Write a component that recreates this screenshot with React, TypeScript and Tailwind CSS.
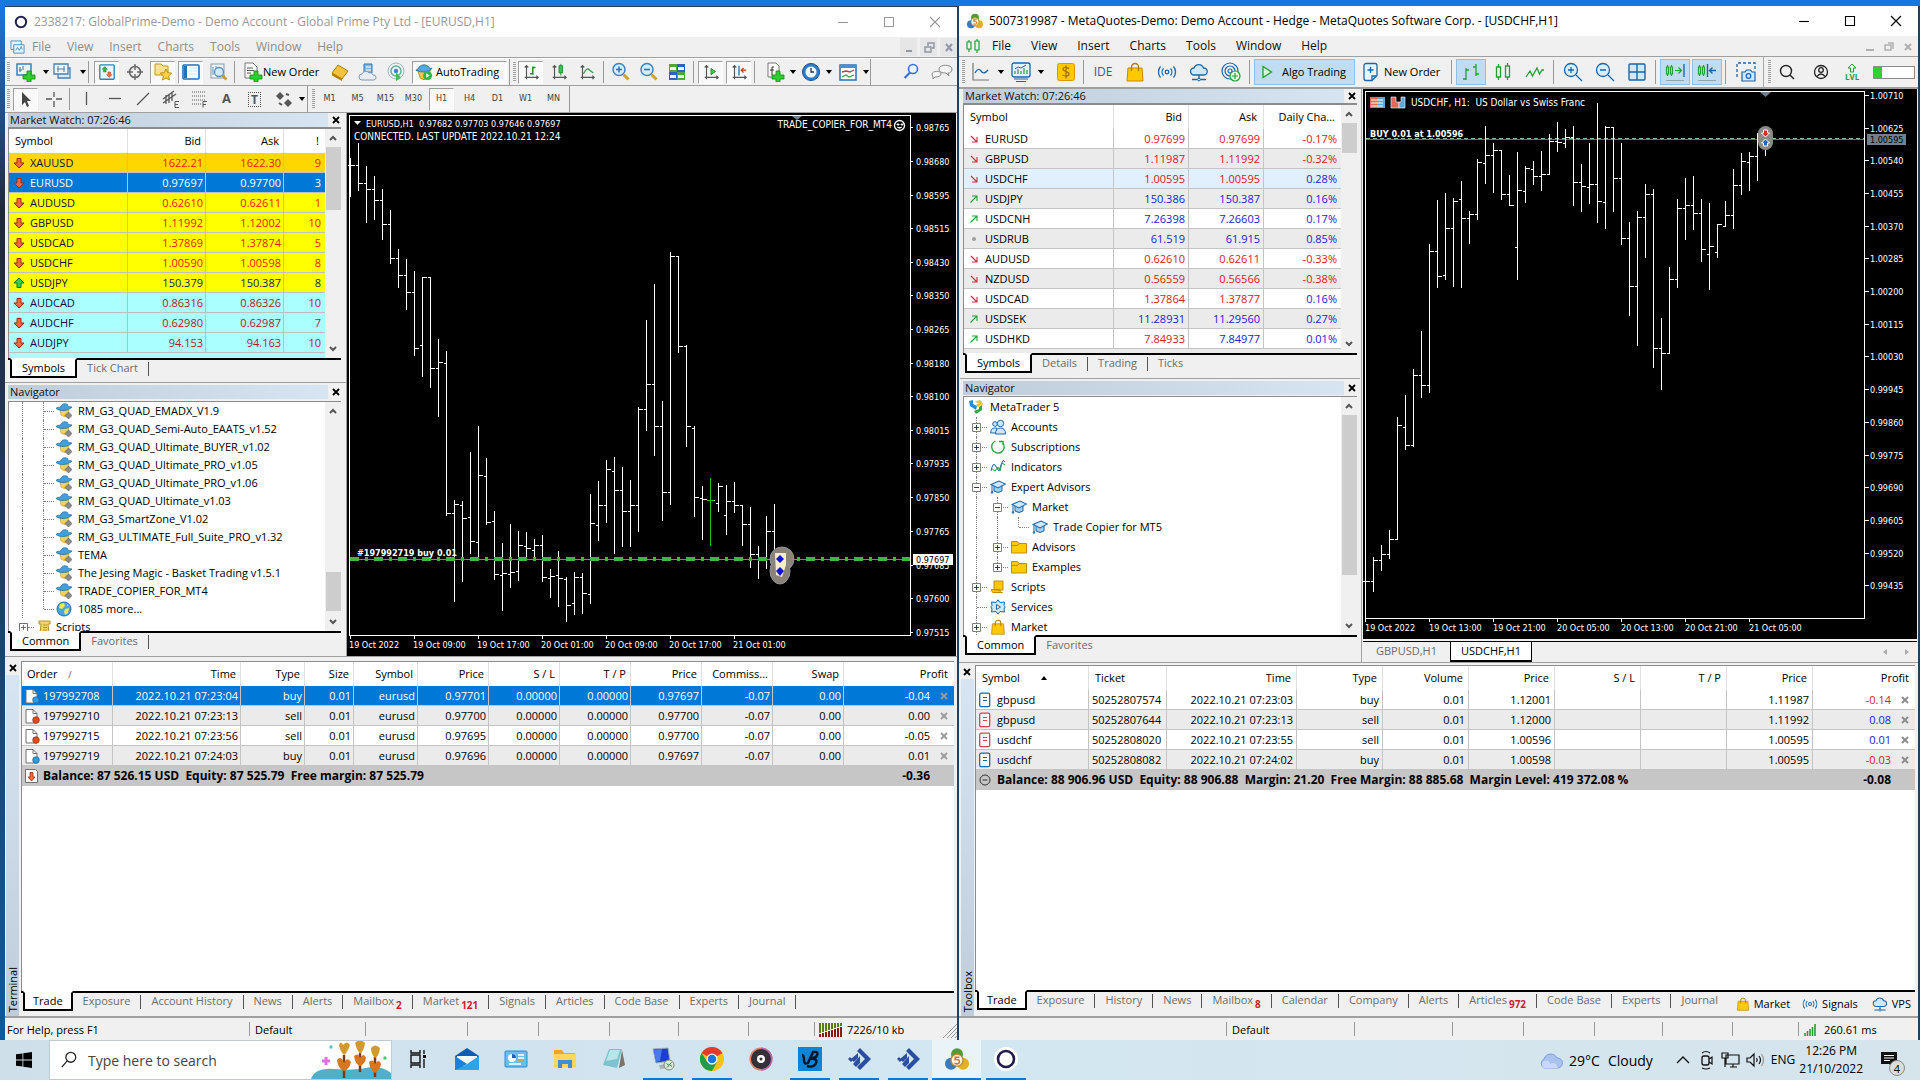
import type { ReactNode } from "react"
import clsx from "clsx"

type Bar = [number, number, number, number]

// open, high, low, close in chart pixels
const eurusdBars: Bar[] = [
  [165, 158, 196, 165], [165, 143, 190, 183], [183, 166, 222, 189], [189, 176, 219, 200], [200, 189, 239, 224],
  [224, 210, 263, 258], [258, 249, 287, 275], [275, 259, 309, 292], [292, 271, 355, 348], [345, 277, 376, 277],
  [277, 277, 387, 368], [368, 339, 416, 362], [363, 351, 515, 513], [513, 500, 601, 504], [505, 501, 581, 518],
  [517, 452, 553, 541], [542, 426, 557, 475], [476, 458, 524, 522], [521, 511, 579, 574], [575, 543, 610, 573],
  [574, 524, 587, 572], [571, 531, 580, 545], [546, 532, 557, 548], [550, 539, 556, 545], [545, 535, 581, 577],
  [578, 569, 597, 576], [575, 551, 606, 578], [579, 577, 621, 605], [603, 572, 614, 577], [577, 573, 613, 593],
  [594, 494, 603, 523], [525, 481, 540, 505], [505, 460, 522, 469], [471, 457, 553, 490], [490, 467, 546, 511],
  [511, 480, 546, 505], [505, 407, 531, 409], [409, 320, 430, 384], [384, 284, 455, 426], [426, 401, 520, 492],
  [492, 252, 504, 256], [256, 256, 352, 346], [346, 345, 446, 426], [428, 426, 516, 497], [498, 486, 539, 499],
  [500, 500, 500, 500], [503, 483, 511, 486], [515, 485, 534, 501], [501, 482, 512, 505], [505, 505, 545, 524],
  [524, 507, 567, 554], [554, 546, 578, 557], [557, 516, 568, 531], [531, 504, 558, 558],
]

const usdchfBars: Bar[] = [
  [581, 581, 581, 581], [581, 557, 591, 560], [560, 545, 570, 554], [554, 530, 558, 539], [539, 417, 539, 425],
  [427, 395, 449, 445], [445, 369, 446, 375], [375, 331, 397, 385], [385, 244, 392, 251], [251, 200, 287, 276],
  [275, 193, 279, 228], [228, 198, 286, 201], [199, 181, 287, 218], [218, 211, 243, 214], [214, 159, 219, 162],
  [163, 126, 183, 155], [155, 143, 192, 150], [150, 150, 199, 194], [194, 175, 205, 205], [247, 152, 279, 190],
  [191, 166, 202, 168], [169, 161, 184, 176], [176, 151, 190, 174], [174, 134, 174, 141], [141, 122, 151, 142],
  [143, 129, 147, 137], [137, 126, 205, 182], [182, 164, 211, 186], [187, 143, 203, 184], [184, 103, 222, 201],
  [202, 126, 228, 127], [127, 127, 211, 178], [178, 143, 244, 238], [238, 222, 315, 286], [286, 211, 345, 217],
  [217, 184, 257, 194], [194, 189, 367, 348], [348, 318, 389, 353], [353, 267, 353, 279], [279, 199, 287, 208],
  [208, 178, 239, 205], [205, 176, 229, 213], [213, 199, 261, 249], [254, 203, 289, 246], [252, 224, 257, 224],
  [226, 201, 226, 215], [215, 169, 228, 185], [185, 153, 194, 161], [162, 152, 190, 156], [156, 133, 180, 139],
  [139, 139, 155, 139],
]

const barPath = (bars: Bar[], x0: number) =>
  bars
    .map(([o, h, l, c], i) => {
      const x = x0 + i * 8
      return `M${x} ${h}V${l + 1}M${x - 3} ${o}H${x}M${x} ${c}H${x + 4}`
    })
    .join("")

const mt4Quotes = [
  { symbol: "XAUUSD", bid: "1622.21", ask: "1622.30", spread: 9, up: false, row: "bg-[#ffd700] text-[#f02000]" },
  { symbol: "EURUSD", bid: "0.97697", ask: "0.97700", spread: 3, up: false, row: "bg-[#0078d7] text-white", selected: true },
  { symbol: "AUDUSD", bid: "0.62610", ask: "0.62611", spread: 1, up: false, row: "bg-[#ffff00] text-[#f02000]" },
  { symbol: "GBPUSD", bid: "1.11992", ask: "1.12002", spread: 10, up: false, row: "bg-[#ffff00] text-[#f02000]" },
  { symbol: "USDCAD", bid: "1.37869", ask: "1.37874", spread: 5, up: false, row: "bg-[#ffff00] text-[#f02000]" },
  { symbol: "USDCHF", bid: "1.00590", ask: "1.00598", spread: 8, up: false, row: "bg-[#ffff00] text-[#f02000]" },
  { symbol: "USDJPY", bid: "150.379", ask: "150.387", spread: 8, up: true, row: "bg-[#ffff00] text-[#1a1a60]" },
  { symbol: "AUDCAD", bid: "0.86316", ask: "0.86326", spread: 10, up: false, row: "bg-[#aaffff] text-[#b01c28]" },
  { symbol: "AUDCHF", bid: "0.62980", ask: "0.62987", spread: 7, up: false, row: "bg-[#aaffff] text-[#b01c28]" },
  { symbol: "AUDJPY", bid: "94.153", ask: "94.163", spread: 10, up: false, row: "bg-[#aaffff] text-[#b01c28]" },
]

const mt5Quotes = [
  { symbol: "EURUSD", bid: "0.97699", ask: "0.97699", change: "-0.17%", dir: "down", bidUp: false, askUp: false },
  { symbol: "GBPUSD", bid: "1.11987", ask: "1.11992", change: "-0.32%", dir: "down", bidUp: false, askUp: false },
  { symbol: "USDCHF", bid: "1.00595", ask: "1.00595", change: "0.28%", dir: "down", bidUp: false, askUp: false },
  { symbol: "USDJPY", bid: "150.386", ask: "150.387", change: "0.16%", dir: "up", bidUp: true, askUp: true },
  { symbol: "USDCNH", bid: "7.26398", ask: "7.26603", change: "0.17%", dir: "up", bidUp: true, askUp: true },
  { symbol: "USDRUB", bid: "61.519", ask: "61.915", change: "0.85%", dir: "none", bidUp: true, askUp: true },
  { symbol: "AUDUSD", bid: "0.62610", ask: "0.62611", change: "-0.33%", dir: "down", bidUp: false, askUp: false },
  { symbol: "NZDUSD", bid: "0.56559", ask: "0.56566", change: "-0.38%", dir: "down", bidUp: false, askUp: false },
  { symbol: "USDCAD", bid: "1.37864", ask: "1.37877", change: "0.16%", dir: "down", bidUp: false, askUp: false },
  { symbol: "USDSEK", bid: "11.28931", ask: "11.29560", change: "0.27%", dir: "up", bidUp: true, askUp: true },
  { symbol: "USDHKD", bid: "7.84933", ask: "7.84977", change: "0.01%", dir: "up", bidUp: false, askUp: true },
]

const mt4Experts = [
  "RM_G3_QUAD_EMADX_V1.9",
  "RM_G3_QUAD_Semi-Auto_EAATS_v1.52",
  "RM_G3_QUAD_Ultimate_BUYER_v1.02",
  "RM_G3_QUAD_Ultimate_PRO_v1.05",
  "RM_G3_QUAD_Ultimate_PRO_v1.06",
  "RM_G3_QUAD_Ultimate_v1.03",
  "RM_G3_SmartZone_V1.02",
  "RM_G3_ULTIMATE_Full_Suite_PRO_v1.32",
  "TEMA",
  "The Jesing Magic - Basket Trading v1.5.1",
  "TRADE_COPIER_FOR_MT4",
  "1085 more...",
]

const mt4Orders = [
  ["197992708", "2022.10.21 07:23:04", "buy", "0.01", "eurusd", "0.97701", "0.00000", "0.00000", "0.97697", "-0.07", "0.00", "-0.04"],
  ["197992710", "2022.10.21 07:23:13", "sell", "0.01", "eurusd", "0.97700", "0.00000", "0.00000", "0.97700", "-0.07", "0.00", "0.00"],
  ["197992715", "2022.10.21 07:23:56", "sell", "0.01", "eurusd", "0.97695", "0.00000", "0.00000", "0.97700", "-0.07", "0.00", "-0.05"],
  ["197992719", "2022.10.21 07:24:03", "buy", "0.01", "eurusd", "0.97696", "0.00000", "0.00000", "0.97697", "-0.07", "0.00", "0.01"],
]

const mt5Orders = [
  ["gbpusd", "50252807574", "2022.10.21 07:23:03", "buy", "0.01", "1.12001", "", "", "1.11987", "-0.14"],
  ["gbpusd", "50252807644", "2022.10.21 07:23:13", "sell", "0.01", "1.12000", "", "", "1.11992", "0.08"],
  ["usdchf", "50252808020", "2022.10.21 07:23:55", "sell", "0.01", "1.00596", "", "", "1.00595", "0.01"],
  ["usdchf", "50252808082", "2022.10.21 07:24:02", "buy", "0.01", "1.00598", "", "", "1.00595", "-0.03"],
]

/* ---------- shared bits ---------- */

function Svg({ children, className = "size-5", box = "0 0 20 20" }: { children: ReactNode; className?: string; box?: string }) {
  return (
    <svg viewBox={box} className={clsx("shrink-0", className)} fill="none" aria-hidden="true">
      {children}
    </svg>
  )
}

function CloseX({ className = "text-black" }: { className?: string }) {
  return (
    <Svg box="0 0 8 8" className={clsx("size-2", className)}>
      <path d="M1 1l6 6M7 1L1 7" stroke="currentColor" strokeWidth="1.8" />
    </Svg>
  )
}

function Caret() {
  return (
    <Svg box="0 0 8 6" className="h-1.5 w-2">
      <path d="M1 1h6L4 5z" fill="#000" />
    </Svg>
  )
}

function ScrollBar({ thumb }: { thumb: string }) {
  return (
    <div className="flex w-4 shrink-0 flex-col items-center bg-[#f0f0f0]">
      <Svg box="0 0 16 18" className="h-[18px] w-4">
        <path d="M5 11l3-3 3 3" stroke="#555" strokeWidth="2" />
      </Svg>
      <div className="relative w-full flex-1">
        <div className={clsx("absolute right-0 w-[15px] bg-[#cdcdcd]", thumb)} />
      </div>
      <Svg box="0 0 16 18" className="h-[18px] w-4">
        <path d="M5 7l3 3 3-3" stroke="#555" strokeWidth="2" />
      </Svg>
    </div>
  )
}

function PanelHeader({ title }: { title: string }) {
  return (
    <div className="-mr-[3px] flex h-[14px] shrink-0 items-center">
      <h2 className="flex h-[14px] flex-1 items-center bg-linear-to-r from-[#bfcddb] to-[#d7e4f2] pl-0.5 text-[11px] leading-3 text-[#111]">{title}</h2>
      <button className="flex h-[14px] w-4 items-center justify-center" aria-label={`Close ${title}`}>
        <CloseX />
      </button>
    </div>
  )
}

// tab strip below a panel, the first tab is the open one
function Tabs({ items, closed = true, first = "px-2.5" }: { items: { label: string; count?: string }[]; closed?: boolean; first?: string }) {
  return (
    <div className="flex h-5 min-w-0 flex-1 items-stretch text-[11px] leading-4 text-[#6d6d6d]">
      <div className="w-0.5 shrink-0 border-t-2 border-black" />
      {items.map((t, i) =>
        i === 0 ? (
          <button key={t.label} className={clsx("shrink-0 border-2 border-black border-t-white bg-white text-black", first)}>
            {t.label}
          </button>
        ) : (
          <div key={t.label} className="flex shrink-0 items-center border-t-2 border-black">
            {i > 1 && <span className="h-[14px] w-px bg-[#555]" />}
            <button className="relative px-2.5 pb-0.5 whitespace-nowrap">
              {t.label}
              {t.count && <sub className="bottom-[-4px] ml-0.5 text-[10px] font-bold text-[#d02030]">{t.count}</sub>}
            </button>
          </div>
        )
      )}
      <div className="flex flex-1 items-center border-t-2 border-black">{closed && <span className="h-[14px] w-px bg-[#555]" />}</div>
    </div>
  )
}

// blue strip on the left of the bottom panel, its name reads upwards
function SideCaption({ title }: { title: string }) {
  return (
    <>
      <button aria-label={`Close ${title}`} className="flex h-[14px] items-center">
        <CloseX />
      </button>
      <div className="flex w-[13px] flex-1 flex-col justify-end bg-linear-to-b from-[#d7e4f2] to-[#bfcddb] pb-1">
        <span className="rotate-180 text-[11px] leading-[13px] text-black [writing-mode:vertical-rl]">{title}</span>
      </div>
    </>
  )
}

function Grip({ className = "h-5" }: { className?: string }) {
  return <span className={clsx("w-[3px] shrink-0 bg-[repeating-linear-gradient(#a0a0a0_0_1px,#f0f0f0_1px_2px)]", className)} />
}

/* ---------- MT4 ---------- */

function Tool({ children, label, on = false, className = "w-[25px]" }: { children: ReactNode; label: string; on?: boolean; className?: string }) {
  return (
    <button
      aria-label={label}
      className={clsx(
        "mr-[3px] flex h-[23px] shrink-0 items-center justify-center border",
        on ? "border-[#a0a0a0] border-r-white border-b-white bg-[#f9f9f9]" : "border-transparent",
        className
      )}
    >
      {children}
    </button>
  )
}

function Sep({ className = "mr-1 ml-px h-[22px]" }: { className?: string }) {
  return <span className={clsx("w-px shrink-0 bg-[#999]", className)} />
}

function Plus() {
  return <path d="M11 9h4v4h4v4h-4v3h-4v-3H7v-4h4z" fill="#2fce2f" stroke="#0a8a0a" strokeWidth=".8" />
}

function Axes({ children }: { children: ReactNode }) {
  return (
    <Svg className="size-[18px]">
      <path d="M5 3v15M3 16h15M3 5l2-2 2 2M16 14l2 2-2 2" stroke="#555" strokeWidth="1.3" />
      {children}
    </Svg>
  )
}

function Mt4Tools() {
  return (
    <div className="flex h-[27px] items-center border-t border-white pl-0.5">
      <Grip />
      <button aria-label="New Chart" className="ml-1.5 flex w-[37px] shrink-0 items-center gap-1.5">
        <Svg>
          <rect x="1" y="2" width="14" height="11" fill="#eaf5fb" stroke="#2f78b5" strokeWidth="1.4" />
          <path d="M4 5v5M7 4v4M3 8h3" stroke="#2f78b5" />
          <Plus />
        </Svg>
        <Caret />
      </button>
      <button aria-label="Profiles" className="flex w-[35px] shrink-0 items-center gap-1.5">
        <Svg>
          <path d="M5 6h12v10H5z" fill="#d9ebf7" stroke="#4b7fae" strokeWidth="1.3" />
          <path d="M1 2h14v10H1z" fill="#eef6fb" stroke="#4b7fae" strokeWidth="1.3" />
          <path d="M4 7h8M5 4v6M11 4v6" stroke="#4b7fae" />
        </Svg>
        <Caret />
      </button>
      <Sep className="mr-1 h-[22px]" />
      <span className="w-px" />
      <Tool label="Market Watch" on>
        <Svg className="size-[18px]">
          <rect x="2" y="2" width="16" height="16" rx="1" fill="#eaf6fc" stroke="#2a84b8" strokeWidth="1.5" />
          <path d="M7.500 4l3 3H9v3H6V7H4.500z" fill="#35b64a" stroke="#137a25" strokeWidth=".5" />
          <path d="M12.500 16l-3-3H11v-3h3v3h1.500z" fill="#f2703f" stroke="#a8320f" strokeWidth=".5" />
        </Svg>
      </Tool>
      <Tool label="Data Window">
        <Svg>
          <circle cx="10" cy="10" r="5.500" stroke="#666" strokeWidth="1.600" />
          <path d="M10 2v6M10 12v6M2 10h6M12 10h6" stroke="#666" strokeWidth="1.400" />
        </Svg>
      </Tool>
      <Tool label="Navigator" on>
        <Svg>
          <path d="M2 2h6l2 2h5v9H2z" fill="#fbe292" stroke="#c39a1d" />
          <path d="M13 7l1.700 3.600 4 .5-3 2.800.8 4.100-3.500-2-3.500 2 .8-4.100-3-2.800 4-.5z" fill="#ffd23f" stroke="#b27b08" strokeWidth=".8" />
        </Svg>
      </Tool>
      <Tool label="Terminal" on>
        <Svg>
          <rect x="2" y="3" width="16" height="14" rx="1" fill="#fff" stroke="#2a6fae" strokeWidth="1.600" />
          <path d="M3 4h3v12H3z" fill="#2a6fae" />
          <path d="M8 6h8M8 9h8M8 12h8" stroke="#cfe2f2" />
        </Svg>
      </Tool>
      <Tool label="Strategy Tester">
        <Svg>
          <rect x="2" y="2" width="13" height="14" fill="#f4f7fa" stroke="#8a99a8" />
          <path d="M4 5v8M7 4v6" stroke="#4f94c9" />
          <circle cx="10" cy="10" r="4.500" fill="#cfe8fa" stroke="#5790c0" strokeWidth="1.300" />
          <path d="M13.500 13.500l4 4" stroke="#c79a2c" strokeWidth="2.500" />
        </Svg>
      </Tool>
      <Sep className="mr-2 h-[22px]" />
      <button className="flex w-[84px] shrink-0 items-center text-[11px] whitespace-nowrap text-black">
        <Svg>
          <path d="M2 1h8l4 4v11H2z" fill="#fff" stroke="#777" />
          <path d="M4 6h6M4 8.500h7M4 11h4" stroke="#555" />
          <Plus />
        </Svg>
        New Order
      </button>
      <Tool label="MetaEditor">
        <Svg>
          <path d="M2 11l6-8 10 6-6 8z" fill="#f2c23c" stroke="#b07c0b" />
          <path d="M2 11l10 6v2L2 13.500z" fill="#b9790a" />
        </Svg>
      </Tool>
      <Tool label="MQL5 Cloud">
        <Svg>
          <path d="M6 2h8v9H6z" fill="#7db8e8" stroke="#2f78b5" />
          <path d="M8 5h5M8 8h5" stroke="#fff" />
          <path d="M4 18a3 3 0 010-6 4 4 0 017-1 3 3 0 014 2 2.500 2.500 0 011 5z" fill="#e7eef5" stroke="#7f9ab5" />
        </Svg>
      </Tool>
      <Tool label="Signals">
        <Svg>
          <circle cx="10" cy="9" r="8" stroke="#9db7c9" />
          <circle cx="10" cy="9" r="5" stroke="#5fae93" strokeWidth="1.400" />
          <circle cx="10" cy="9" r="2.200" fill="#2f8ad0" />
          <path d="M10 10v9l5-3" fill="#49b85c" />
        </Svg>
      </Tool>
      <button className="ml-px flex h-[23px] w-[95px] shrink-0 items-center gap-[3px] border border-[#a0a0a0] border-r-white border-b-white bg-[#f9f9f9] px-0.5 text-[11px] text-black">
        <Svg className="size-[18px]">
          <path d="M3 8h14l-3 9q-4 3-8 0z" fill="#f0cb45" stroke="#ad841d" />
          <path d="M1 8q3-1 4-4 5-4 10 0 1 3 4 2-7 7-18 2z" fill="#55a8dc" stroke="#2774aa" />
          <circle cx="14" cy="14" r="5" fill="#2fb544" />
          <path d="M12.500 11.500v5l4-2.500z" fill="#fff" />
        </Svg>
        AutoTrading
      </button>
      <Sep className="mr-[3px] ml-0.5 h-[26px]" />
      <Grip />
      <span className="w-0.5" />
      <Tool label="Bar Chart" on>
        <Axes>
          <path d="M12 4v9M9 12h3M12 5h3" stroke="#1e8c2c" strokeWidth="1.600" />
        </Axes>
      </Tool>
      <Tool label="Candlesticks">
        <Axes>
          <path d="M12 1v13" stroke="#1e8c2c" />
          <path d="M10 3h4v8h-4z" fill="#35c84a" stroke="#1e8c2c" />
        </Axes>
      </Tool>
      <Tool label="Line Chart">
        <Axes>
          <path d="M6 12q4-8 7-4l4 3" stroke="#3f9a4c" strokeWidth="1.400" />
        </Axes>
      </Tool>
      <Sep />
      <Tool label="Zoom In">
        <Svg>
          <circle cx="8" cy="7.500" r="6" fill="#d5ecfb" stroke="#3b86c2" strokeWidth="1.500" />
          <path d="M8 4.500v6M5 7.500h6" stroke="#2e74b0" strokeWidth="1.600" />
          <path d="M12.500 12.500l5 5" stroke="#cfa32e" strokeWidth="3" />
        </Svg>
      </Tool>
      <Tool label="Zoom Out">
        <Svg>
          <circle cx="8" cy="7.500" r="6" fill="#d5ecfb" stroke="#3b86c2" strokeWidth="1.500" />
          <path d="M5 7.500h6" stroke="#2e74b0" strokeWidth="1.600" />
          <path d="M12.500 12.500l5 5" stroke="#cfa32e" strokeWidth="3" />
        </Svg>
      </Tool>
      <Tool label="Tile Windows">
        <Svg>
          <path d="M2 2h8v8H2zM10 10h8v8h-8z" fill="#4ea832" />
          <path d="M10 2h8v8h-8zM2 10h8v8H2z" fill="#2b63c4" />
          <path d="M3 5h6v3H3zM11 5h6v3h-6zM3 13h6v3H3zM11 13h6v3h-6z" fill="#eef4ff" />
        </Svg>
      </Tool>
      <Sep />
      <Tool label="Auto Scroll" on>
        <Axes>
          <path d="M10 6v7l5-3.500z" fill="#35c84a" stroke="#1e8c2c" />
        </Axes>
      </Tool>
      <Tool label="Chart Shift" on>
        <Axes>
          <path d="M10 3v11" stroke="#2774aa" strokeWidth="1.500" />
          <path d="M18 8h-5M15 5.500L12.500 8l2.500 2.500" stroke="#c33a13" strokeWidth="1.400" />
        </Axes>
      </Tool>
      <Sep className="mr-2.5 h-[22px]" />
      <button aria-label="Indicators" className="flex w-9 shrink-0 items-center gap-1">
        <Svg>
          <path d="M3 1h8l3 3v11H3z" fill="#fff" stroke="#777" />
          <path d="M9 5H7v8M5 8h4" stroke="#333" />
          <Plus />
        </Svg>
        <Caret />
      </button>
      <button aria-label="Periods" className="flex w-[37px] shrink-0 items-center gap-1">
        <Svg>
          <circle cx="10" cy="10" r="8.500" fill="#2f7fc8" stroke="#1b4f8c" />
          <circle cx="10" cy="10" r="5.500" fill="#f3f9fd" />
          <path d="M10 6v4h3" stroke="#234" strokeWidth="1.300" />
        </Svg>
        <Caret />
      </button>
      <button aria-label="Templates" className="flex w-8 shrink-0 items-center gap-1">
        <Svg>
          <rect x="2" y="3" width="16" height="15" fill="#fff" stroke="#2a6fae" strokeWidth="1.500" />
          <path d="M2 3h16v3H2z" fill="#4a90d0" />
          <path d="M4 10l4-1 4 1 4-2" stroke="#b04a3c" strokeWidth="1.300" />
          <path d="M4 15l4-2 3 2 5-2" stroke="#3a9a46" strokeWidth="1.300" />
        </Svg>
        <Caret />
      </button>
      <span className="h-[26px] w-px bg-[#999]" />
      <div className="flex flex-1 items-center justify-end gap-2.5 pr-1">
        <Svg>
          <circle cx="12" cy="7" r="4.500" fill="#eaf5ff" stroke="#3b6fd8" strokeWidth="1.600" />
          <path d="M9 10.500L3.500 16" stroke="#3b6fd8" strokeWidth="2.200" />
        </Svg>
        <Svg box="0 0 22 16" className="h-4 w-[22px]">
          <path d="M1 10c0-3 9-4 9 0 0 2-3 3-6 3l-2 2v-2z" fill="#f4f4f4" stroke="#8a8a8a" />
          <path d="M8 5c0-5 13-5 13 0 0 3-2 4-4 4l1 3-3-3c-4 0-7-1-7-4z" fill="#f4f4f4" stroke="#8a8a8a" />
        </Svg>
      </div>
    </div>
  )
}

function Mt4DrawTools() {
  const line = "#555"
  const frames = ["M1", "M5", "M15", "M30", "H1", "H4", "D1", "W1", "MN"]
  return (
    <div className="flex h-[27px] items-center border-t border-[#a0a0a0] pl-0.5 text-[#444]">
      <Grip />
      <span className="w-[3px]" />
      <Tool label="Cursor" on>
        <Svg><path d="M6 3v13l3-3 2 5 2-1-2-5h4z" fill="#444" /></Svg>
      </Tool>
      <Tool label="Crosshair">
        <Svg><path d="M10 3v5M10 12v6M2 10h6M12 10h6" stroke={line} strokeWidth="1.300" /></Svg>
      </Tool>
      <Sep className="mr-1 h-[22px]" />
      <Tool label="Vertical Line">
        <Svg><path d="M9.500 3v13" stroke={line} strokeWidth="1.300" /></Svg>
      </Tool>
      <Tool label="Horizontal Line">
        <Svg><path d="M4 9.500h12" stroke={line} strokeWidth="1.300" /></Svg>
      </Tool>
      <Tool label="Trendline">
        <Svg><path d="M4 16L16 4" stroke={line} strokeWidth="1.300" /></Svg>
      </Tool>
      <Tool label="Equidistant Channel">
        <Svg>
          <path d="M2 10L13 2M2 14L15 5M5 6v9M8 5v9M11 3v9" stroke={line} strokeWidth="1.300" />
          <path d="M18 12.500h-4v6h4M14 15.500h3" stroke={line} />
        </Svg>
      </Tool>
      <Tool label="Fibonacci">
        <Svg>
          <path d="M3 3h14M3 7h14M3 11h14M3 15h9" stroke={line} strokeDasharray="1 1" />
          <path d="M18 12.500h-4v6M14 15.500h3" stroke={line} />
        </Svg>
      </Tool>
      <Tool label="Text">
        <span className="text-[13px] font-bold text-[#555]">A</span>
      </Tool>
      <Tool label="Text Label">
        <span className="border border-dotted border-[#555] px-0.5 text-[12px] leading-[13px] font-bold text-[#555]">T</span>
      </Tool>
      <button aria-label="Arrows" className="flex w-[37px] shrink-0 items-center gap-1 pl-1">
        <Svg>
          <path d="M6 3l4 4-4 4-4-4zM14 10l4 4-4 4-4-4z" fill="#555" />
          <path d="M5 14l3 2M12 5l3 1" stroke="#555" strokeWidth="2" />
        </Svg>
        <Caret />
      </button>
      <span className="mr-1 h-[26px] w-px bg-[#999]" />
      <Grip />
      <span className="w-0.5" />
      {frames.map((f) => (
        <Tool key={f} label={f} on={f === "H1"}>
          <span className="font-['DejaVu_Sans_Condensed','DejaVu_Sans',sans-serif] text-[9px]">{f}</span>
        </Tool>
      ))}
      <span className="h-[26px] w-px bg-[#999]" />
    </div>
  )
}

function QuoteArrow({ up }: { up: boolean }) {
  return (
    <Svg box="0 0 12 12" className="size-3">
      {up ? (
        <path d="M6 1l5 5H8v4.500H4V6H1z" fill="#35d04a" stroke="#0d7a1e" />
      ) : (
        <path d="M6 11L1 6h3V1.500h4V6h3z" fill="#f4693a" stroke="#a3290a" />
      )}
    </Svg>
  )
}

function HatIcon() {
  return (
    <Svg box="0 0 16 16" className="size-4">
      <path d="M4 7h9l-1 5-3 2-4-2z" fill="#f0d25c" stroke="#b8952f" strokeWidth=".6" />
      <path d="M0 5.500C3 8.500 13 8 16 4 13 3.500 12 4 11.500 1.500 9 0 6 .5 4.500 4 3 4.500 1 4 0 5.500z" fill="#3fa0dc" stroke="#1d6aa5" strokeWidth=".7" />
      <path d="M12.500 9l3.500 3.500-3.500 3.500L9 12.500z" fill="#8a8a8a" stroke="#5c5c5c" strokeWidth=".6" />
    </Svg>
  )
}

function Mt4MarketWatch() {
  return (
    <section className="flex h-[270px] flex-col border-b border-[#a0a0a0] pr-[5px] pb-1 pl-[3px]">
      <PanelHeader title="Market Watch: 07:26:46" />
      <div className="flex min-h-0 flex-1 overflow-hidden border-t-2 border-l border-[#8c8c8c] bg-white">
        <div className="min-w-0 flex-1 overflow-hidden bg-[linear-gradient(white_60%,#aaffff_60%)]">
          <table className="w-full table-fixed border-separate border-spacing-0 bg-white text-[11px] leading-4">
            <colgroup>
              <col />
              <col className="w-[78px]" />
              <col className="w-[78px]" />
              <col className="w-[41px]" />
            </colgroup>
            <thead>
              <tr className="h-6 text-right">
                <th className="border-r border-[#e0e0e0] pl-1.5 text-left font-normal">Symbol</th>
                <th className="border-r border-[#e0e0e0] pr-1 font-normal">Bid</th>
                <th className="border-r border-[#e0e0e0] pr-1 font-normal">Ask</th>
                <th className="pr-1.5 font-normal">!</th>
              </tr>
            </thead>
            <tbody>
              {mt4Quotes.map((q) => (
                <tr key={q.symbol} className={clsx("h-5 text-right", q.row)}>
                  <td className={clsx("border-r border-b border-[#c0c0c0] pl-1 text-left", q.selected ? "text-white" : "text-[#10103a]")}>
                    <span className="flex items-center gap-[5px]">
                      <QuoteArrow up={q.up} />
                      {q.symbol}
                    </span>
                  </td>
                  <td className="border-r border-b border-[#c0c0c0] pr-0.5">{q.bid}</td>
                  <td className="border-r border-b border-[#c0c0c0] pr-0.5">{q.ask}</td>
                  <td className="border-b border-[#c0c0c0] pr-1">{q.spread}</td>
                </tr>
              ))}
            </tbody>
          </table>
        </div>
        <ScrollBar thumb="top-0 h-[63px]" />
      </div>
      <div className="flex">
        <Tabs items={[{ label: "Symbols" }, { label: "Tick Chart" }]} />
      </div>
    </section>
  )
}

function Mt4Navigator() {
  return (
    <section className="flex min-h-0 flex-1 flex-col pt-0.5 pr-[5px] pb-[5px] pl-[3px]">
      <PanelHeader title="Navigator" />
      <div className="mt-0.5 flex min-h-0 flex-1 overflow-hidden border-t border-l border-[#8c8c8c] bg-white">
        <ul className="h-0 min-w-0 flex-1 text-[11px] leading-4 text-black">
          {mt4Experts.map((name, i) => (
            <li key={name} className="flex h-[18px] items-center">
              <span className="h-full w-[14px] border-r border-dotted border-[#808080]" />
              <span className={clsx("w-[21px] border-r border-dotted border-[#808080]", i === mt4Experts.length - 1 ? "h-1/2 self-start" : "h-full")} />
              <span className="mr-0.5 w-[10px] border-t border-dotted border-[#808080]" />
              {i === mt4Experts.length - 1 ? (
                <Svg box="0 0 16 16" className="size-4">
                  <circle cx="8" cy="8" r="7" fill="#49a5dc" stroke="#2070a8" />
                  <path d="M4 3l4-1 1 3-3 3-3-1zM9 8l4-1-1 5-3 2-1-3zM11 3l2 2h-2z" fill="#e6e85a" />
                </Svg>
              ) : (
                <HatIcon />
              )}
              <span className="ml-1.5 whitespace-nowrap">{name}</span>
            </li>
          ))}
          <li className="flex h-[18px] items-center">
            <Svg box="0 0 9 9" className="ml-[10px] size-[9px]">
              <path d="M.5.5h8v8h-8zM2 4.500h5M4.500 2v5" stroke="#707070" />
            </Svg>
            <span className="mr-0.5 w-1.5 border-t border-dotted border-[#808080]" />
            <Svg box="0 0 16 16" className="size-4">
              <path d="M3 2h11v3h-2l1 9H4l1-9H3z" fill="#f3d565" stroke="#b5922a" />
              <path d="M7 6h4M7 8.500h4M7 11h4" stroke="#b5922a" />
            </Svg>
            <span className="ml-1">Scripts</span>
          </li>
        </ul>
        <ScrollBar thumb="bottom-0.5 h-[39px]" />
      </div>
      <div className="flex">
        <Tabs items={[{ label: "Common" }, { label: "Favorites" }]} />
      </div>
    </section>
  )
}

const mt4Axis: [string, number][] = [
  ["0.98765", 127], ["0.98680", 161], ["0.98595", 195], ["0.98515", 228], ["0.98430", 262], ["0.98350", 295],
  ["0.98265", 329], ["0.98180", 363], ["0.98100", 396], ["0.98015", 430], ["0.97935", 463], ["0.97850", 497],
  ["0.97765", 531], ["0.97685", 565], ["0.97600", 598], ["0.97515", 632],
]
const mt4Dates = ["19 Oct 2022", "19 Oct 09:00", "19 Oct 17:00", "20 Oct 01:00", "20 Oct 09:00", "20 Oct 17:00", "21 Oct 01:00"]

function Mt4Chart() {
  return (
    <svg viewBox="347 113 609 543" className="block size-full bg-black font-['DejaVu_Sans_Condensed','DejaVu_Sans',sans-serif] text-[9px]" fill="white">
      <path d="M349.500 635V115.500H910.500V635.500H349" stroke="white" fill="none" shapeRendering="crispEdges" />
      <path d={barPath(eurusdBars, 350.5)} stroke="white" fill="none" shapeRendering="crispEdges" />
      <path d="M710.500 478V546M707 500.500H714" stroke="#20c020" fill="none" shapeRendering="crispEdges" />
      <path d="M350 559.500H910" stroke="#778899" shapeRendering="crispEdges" />
      <path d="M350 559H910" stroke="#3cb83c" strokeWidth="4" strokeDasharray="9 6 3 6" />
      <g>
        <ellipse cx="782" cy="559" rx="12" ry="12" fill="#8b8378" stroke="#8a94a0" />
        <ellipse cx="780" cy="571" rx="10" ry="13" fill="#8b8378" stroke="#8a94a0" />
        <path d="M775 553h11v12l-4 12-6-2z" fill="#f4eecb" />
        <path d="M780 555l4 4-4 4-4-4zM780 567l4 4-4 5-4-5z" fill="#1010d8" />
      </g>
      <path d="M792 116h10l-5 4z" fill="#708090" />
      <path d="M354 121h7l-3.500 4z" />
      <text x="366" y="127" xmlSpace="preserve">EURUSD,H1  0.97682 0.97703 0.97646 0.97697</text>
      <text x="354" y="140" className="text-[10px]">CONNECTED. LAST UPDATE 2022.10.21 12:24</text>
      <text x="892" y="128" textAnchor="end" className="text-[10px]">TRADE_COPIER_FOR_MT4</text>
      <circle cx="899.500" cy="125.500" r="5" fill="none" stroke="white" strokeWidth="1.300" />
      <path d="M897 124h2v1h-2zM901 124h2v1h-2zM897 127q2.500 2.500 5 0" stroke="white" strokeWidth=".8" />
      <text x="357" y="556" className="font-bold">#197992719 buy 0.01</text>
      {mt4Axis.map(([label, y]) => (
        <g key={label}>
          <path d={`M910 ${y + 0.5}h3`} stroke="white" shapeRendering="crispEdges" />
          <text x="916" y={y + 4}>{label}</text>
        </g>
      ))}
      <rect x="913" y="554" width="40" height="11" />
      <text x="916" y="563" fill="black">0.97697</text>
      {mt4Dates.map((d, i) => (
        <g key={d}>
          <path d={`M${350.5 + i * 64} 635v4`} stroke="white" shapeRendering="crispEdges" />
          <text x={349 + i * 64} y="648">{d}</text>
        </g>
      ))}
    </svg>
  )
}

function DocIcon({ buy }: { buy: boolean }) {
  return (
    <Svg box="0 0 16 16" className="size-4">
      <path d="M2 1.500h7l4 4V15H2z" fill="#fff" stroke="#707070" />
      <path d="M9 1.500v4h4" stroke="#707070" />
      <circle cx="12" cy="12" r="3.300" fill={buy ? "#2f9be0" : "#e04a1c"} stroke={buy ? "#15619c" : "#9a2c0a"} strokeWidth=".7" />
    </Svg>
  )
}

function Mt4Terminal() {
  const heads = ["Time", "Type", "Size", "Symbol", "Price", "S / L", "T / P", "Price", "Commiss...", "Swap"]
  return (
    <section className="flex min-h-0 flex-1 border-t border-[#a0a0a0] pt-1">
      <div className="flex w-[15px] shrink-0 flex-col items-center">
        <SideCaption title="Terminal" />
      </div>
      <div className="flex min-w-0 flex-1 flex-col pr-[3px]">
        <div className="ml-px flex-1 border-t border-l border-[#8c8c8c] bg-white">
          <table className="w-full table-fixed border-separate border-spacing-0 text-right text-[11px] leading-4 text-black">
            <colgroup>
              <col className="w-[91px]" />
              <col className="w-[128px]" />
              <col className="w-[64px]" />
              <col className="w-[49px]" />
              <col className="w-[64px]" />
              <col className="w-[71px]" />
              <col className="w-[71px]" />
              <col className="w-[71px]" />
              <col className="w-[71px]" />
              <col className="w-[71px]" />
              <col className="w-[71px]" />
              <col />
            </colgroup>
            <thead>
              <tr className="h-6">
                <th className="border-r border-[#e0e0e0] pl-[5px] text-left font-normal">Order <span className="ml-2 text-[9px] text-[#555]">/</span></th>
                {heads.map((h, i) => (
                  <th key={i} className="border-r border-[#e0e0e0] pr-1 font-normal">{h}</th>
                ))}
                <th className="pr-1.5 font-normal">Profit</th>
              </tr>
            </thead>
            <tbody>
              {mt4Orders.map((row, r) => (
                <tr key={row[0]} className={clsx("h-5", r === 0 ? "bg-[#0078d7] text-white" : r % 2 ? "bg-[#ebebeb]" : "bg-white")}>
                  <td className="border-r border-b border-[#c4c4c4] pl-0.5 text-left">
                    <span className="flex items-center gap-[3px]">
                      <DocIcon buy={row[2] === "buy"} />
                      {row[0]}
                    </span>
                  </td>
                  {row.slice(1, 11).map((cell, i) => (
                    <td key={i} className="border-r border-b border-[#c4c4c4] pr-0.5">{cell}</td>
                  ))}
                  <td className="border-b border-[#c4c4c4] pr-1.5">
                    <span className="flex items-center justify-end gap-2.5">
                      {row[11]}
                      <CloseX className="text-[#9a9a9a]" />
                    </span>
                  </td>
                </tr>
              ))}
              <tr className="h-5 bg-[#c6c6c6] text-[12px] font-bold">
                <td colSpan={11} className="pl-0.5 text-left">
                  <span className="flex items-center gap-[3px] whitespace-pre">
                    <Svg box="0 0 16 16" className="size-4">
                      <path d="M1.500 1.500h10l2 2v11h-12z" fill="#fff" stroke="#707070" />
                      <path d="M7.500 13L4 9h2V4.500h3V9h2z" fill="#f4693a" stroke="#a3290a" strokeWidth=".8" />
                    </Svg>
                    {"Balance: 87 526.15 USD  Equity: 87 525.79  Free margin: 87 525.79"}
                  </span>
                </td>
                <td className="pr-6">-0.36</td>
              </tr>
            </tbody>
          </table>
        </div>
        <div className="ml-px flex">
          <Tabs
            first="px-2"
            items={[
              { label: "Trade" }, { label: "Exposure" }, { label: "Account History" }, { label: "News" }, { label: "Alerts" },
              { label: "Mailbox", count: "2" }, { label: "Market", count: "121" }, { label: "Signals" }, { label: "Articles" },
              { label: "Code Base" }, { label: "Experts" }, { label: "Journal" },
            ]}
          />
        </div>
        <div className="h-[5px]" />
      </div>
    </section>
  )
}

function Mt4Window() {
  return (
    <main className="mt-px flex min-h-0 min-w-0 flex-col overflow-hidden bg-[#f0f0f0]">
      <header className="flex h-[30px] shrink-0 items-center bg-white pl-[9px] text-[#999]">
        <Svg box="0 0 14 14" className="size-[14px]">
          <circle cx="7" cy="7" r="5.200" stroke="#23234f" strokeWidth="2" />
        </Svg>
        <h1 className="ml-1.5 flex-1 text-[12px] whitespace-nowrap">2338217: GlobalPrime-Demo - Demo Account - Global Prime Pty Ltd - [EURUSD,H1]</h1>
        <WindowButtons />
      </header>
      <nav className="flex h-5 shrink-0 items-center pl-[5px] text-[12px] leading-4 text-[#8e8e8e]">
        <Svg box="0 0 16 16" className="mr-[7px] size-[15px]">
          <path d="M1 1h11v9H1z" fill="#e4f2fb" stroke="#4a90c4" />
          <path d="M4 5h11v9H4z" fill="#e4f2fb" stroke="#4a90c4" />
          <path d="M6 11l2-3 2 3 2-4 1 3" stroke="#4a90c4" />
        </Svg>
        {["File", "View", "Insert", "Charts", "Tools", "Window", "Help"].map((m) => (
          <button key={m} className="pr-4">{m}</button>
        ))}
        <div className="ml-auto flex gap-[3px] text-[#8f97a8]">
          {[
            <path key="a" d="M5 13h6" stroke="currentColor" strokeWidth="2" />,
            <path key="b" d="M4 9h6v5H4zM7 8V5h6v5h-2" stroke="currentColor" strokeWidth="1.500" />,
            <path key="c" d="M5 6l6 7M11 6l-6 7" stroke="currentColor" strokeWidth="2" />,
          ].map((p, i) => (
            <span key={i} className="flex h-[18px] w-[17px] items-center justify-center bg-[#e6e6e6]">
              <Svg box="0 0 16 18" className="h-[18px] w-4">{p}</Svg>
            </span>
          ))}
        </div>
      </nav>
      <div className="shrink-0 border-y border-[#a0a0a0]">
        <Mt4Tools />
        <Mt4DrawTools />
      </div>
      <div className="flex h-[543px] shrink-0">
        <aside className="flex w-[342px] shrink-0 flex-col border-r border-[#a0a0a0]">
          <Mt4MarketWatch />
          <Mt4Navigator />
        </aside>
        <div className="min-w-0 flex-1 pr-px">
          <Mt4Chart />
        </div>
      </div>
      <Mt4Terminal />
      <footer className="flex h-6 shrink-0 items-stretch border-t-2 border-[#a0a0a0] py-1 text-[11px] leading-4 text-black">
        <span className="w-[245px] border-r border-[#999] pl-0.5">For Help, press F1</span>
        <span className="w-[116px] border-r border-[#999] pl-[5px]">Default</span>
        <span className="w-[102px] border-r border-[#999]" />
        <span className="w-[71px] border-r border-[#999]" />
        <span className="w-[71px] border-r border-[#999]" />
        <span className="w-[69px] border-r border-[#999]" />
        <span className="w-[70px] border-r border-[#999]" />
        <span className="w-[66px] border-r border-[#999]" />
        <Svg box="0 0 24 15" className="mr-1 ml-1 h-[15px] w-6">
          {Array.from({ length: 8 }, (_, i) => (
            <g key={i}>
              <rect x={i * 3} y="1" width="2" height={10 - i} fill="#5a7a1a" />
              <rect x={i * 3} y={12 - i} width="2" height={3 + i} fill="#8c1a10" />
            </g>
          ))}
        </Svg>
        <span>7226/10 kb</span>
        <Svg box="0 0 16 16" className="ml-auto size-4">
          <path d="M2 16L16 2M6 16L16 6M10 16l6-6M14 16l2-2" stroke="#999" />
        </Svg>
      </footer>
    </main>
  )
}

function WindowButtons() {
  return (
    <div className="-mr-px flex">
      {["M1 6.500h10", "M1.500 1.500h9v9h-9z", "M1 1l10 10M11 1L1 11"].map((d) => (
        <button key={d} aria-label="Window button" className="flex w-[46px] justify-center">
          <Svg box="0 0 12 12" className="size-3">
            <path d={d} stroke="currentColor" strokeWidth="1.100" />
          </Svg>
        </button>
      ))}
    </div>
  )
}

/* ---------- MT5 ---------- */

const blue = "#1a66a8"
const green = "#21a038"

function BagIcon({ className = "size-5" }: { className?: string }) {
  return (
    <Svg className={className}>
      <path d="M3 6h14l1 13H2z" fill="#ffc800" stroke="#c28a00" />
      <path d="M6.500 9V5a3.500 3.500 0 017 0v4" stroke="#b07c00" strokeWidth="1.300" />
    </Svg>
  )
}

function CloudIcon({ className = "size-5" }: { className?: string }) {
  return (
    <Svg className={className}>
      <path d="M5 13a3.500 3.500 0 010-7 5 5 0 019.500 0 3.500 3.500 0 01.5 7z" fill="#cfe9fb" stroke={blue} strokeWidth="1.300" />
      <path d="M10 13v4M3 17.500h5.500M11.500 17.500H17" stroke={blue} strokeWidth="1.300" />
      <circle cx="10" cy="17.500" r="1.400" stroke={blue} />
    </Svg>
  )
}

function SignalIcon({ className = "size-5" }: { className?: string }) {
  return (
    <Svg className={className}>
      <circle cx="10" cy="10" r="1.800" stroke={blue} strokeWidth="1.300" />
      <path d="M6.500 6.500a5 5 0 000 7M13.500 6.500a5 5 0 010 7M3.500 4.500a8.500 8.500 0 000 11M16.500 4.500a8.500 8.500 0 010 11" stroke={blue} strokeWidth="1.300" />
    </Svg>
  )
}

function CapIcon() {
  return (
    <Svg box="0 0 16 16" className="size-4">
      <path d="M4 7v5q4 3 8 0V7" fill="#9fd0f2" stroke={blue} />
      <path d="M1 5.500L9 2l6.500 3L8 9z" fill="#cfe9fb" stroke={blue} strokeWidth="1.100" />
      <path d="M2 6v6l-1 2h2l-1-2" stroke={blue} />
    </Svg>
  )
}

function FolderIcon() {
  return (
    <Svg box="0 0 16 16" className="size-4">
      <path d="M.5 2.500h6l1.500 2h7.500v9.500H.5z" fill="#ffcc00" stroke="#c08c00" />
      <path d="M.5 6.500h6l1.500-2" stroke="#c08c00" />
    </Svg>
  )
}

function Tool5({ children, label, on = false }: { children: ReactNode; label: string; on?: boolean }) {
  return (
    <button aria-label={label} className={clsx("mr-0.5 flex h-[26px] w-[30px] shrink-0 items-center justify-center border", on ? "border-[#90c0e8] bg-[#c0dcf3]" : "border-transparent")}>
      {children}
    </button>
  )
}

function Mt5Tools() {
  return (
    <div className="flex h-[33px] shrink-0 items-center border-t border-b-2 border-[#a0a0a0] pl-[3px]">
      <Grip className="h-6" />
      <button aria-label="Chart" className="ml-1.5 flex w-10 shrink-0 items-center gap-1.5">
        <Svg>
          <path d="M2 1v17h16" stroke="#777" strokeWidth="1.200" />
          <path d="M4 11q3-6 6-2t7-1" stroke={blue} strokeWidth="1.300" />
        </Svg>
        <Caret />
      </button>
      <button aria-label="Profiles" className="flex w-10 shrink-0 items-center gap-1.5">
        <Svg>
          <rect x="1" y="1" width="18" height="14" rx="2" fill="#e4f3fd" stroke={blue} strokeWidth="1.300" />
          <path d="M3 17h14M5 19.500h10" stroke={blue} strokeWidth="1.200" />
          <path d="M4 12V9M7 12V7M10 12V9M13 12V6M16 12V8" stroke={green} strokeWidth="1.200" />
          <path d="M4 7l3-2 3 1 5-3" stroke={blue} />
        </Svg>
        <Caret />
      </button>
      <Tool5 label="Trade">
        <Svg>
          <rect x="1.500" y="1.500" width="17" height="17" rx="2" fill="#ffc800" stroke="#d09c00" />
          <path d="M13 6.500q-5.500-2.500-6 .5c0 3 6 2 6 5 0 2.500-4 2.500-6.500 1M10 3.500v13" stroke="#a87a00" strokeWidth="1.400" />
        </Svg>
      </Tool5>
      <Sep className="mr-1 h-6" />
      <Tool5 label="MetaEditor">
        <span className="text-[12px] text-[#1a66a8]">IDE</span>
      </Tool5>
      <Tool5 label="Market"><BagIcon /></Tool5>
      <Tool5 label="Signals"><SignalIcon /></Tool5>
      <Tool5 label="VPS"><CloudIcon /></Tool5>
      <Tool5 label="Subscribe">
        <Svg>
          <circle cx="9" cy="9" r="8" stroke={blue} strokeWidth="1.200" />
          <circle cx="9" cy="9" r="5" stroke={blue} strokeWidth="1.200" />
          <circle cx="9" cy="9" r="2" stroke={blue} strokeWidth="1.200" />
          <circle cx="14" cy="14" r="5" fill="#e9fbe9" stroke={green} strokeWidth="1.200" />
          <path d="M14 11v6M11 14h6" stroke={green} strokeWidth="1.200" />
        </Svg>
      </Tool5>
      <Sep className="mr-1 ml-px h-6" />
      <button className="flex h-[26px] w-[101px] shrink-0 items-center gap-[5px] border border-[#90c0e8] bg-[#c0dcf3] pl-0.5 text-[11px] whitespace-nowrap text-black">
        <Svg>
          <path d="M6 4.500v11l8.500-5.500z" fill="#d8f7d8" stroke={green} strokeWidth="1.300" />
        </Svg>
        Algo Trading
      </button>
      <button className="ml-1.5 flex w-[88px] shrink-0 items-center gap-[3px] text-[11px] whitespace-nowrap text-black">
        <Svg>
          <path d="M5 1.500h9a2 2 0 012 2v10l-5 5H5a2 2 0 01-2-2v-13a2 2 0 012-2z" fill="#eaf5fd" stroke={blue} strokeWidth="1.300" />
          <path d="M11 18v-4h4M9.500 5v6M6.500 8h6" stroke={blue} strokeWidth="1.300" />
        </Svg>
        New Order
      </button>
      <Sep className="mr-1 ml-0.5 h-6" />
      <Tool5 label="Bars" on>
        <Svg>
          <path d="M5 6v12M2 17h3M5 8h3M15 2v12M12 5h3M15 12h3" stroke={green} strokeWidth="1.300" />
        </Svg>
      </Tool5>
      <Tool5 label="Candles">
        <Svg>
          <path d="M5.500 2v3M5.500 15v3M14.500 1v3M14.500 15v3M3.500 5h4v10h-4zM12.500 4h4v11h-4z" stroke={green} strokeWidth="1.300" />
        </Svg>
      </Tool5>
      <Tool5 label="Line">
        <Svg>
          <path d="M1 15l4-6 2.500 5L12 6l2.500 6L17 8h2" stroke={green} strokeWidth="1.300" />
        </Svg>
      </Tool5>
      <Sep className="mr-1 ml-px h-6" />
      <Tool5 label="Zoom In">
        <Svg>
          <circle cx="8" cy="8" r="6.500" fill="#d6edfc" stroke={blue} strokeWidth="1.300" />
          <path d="M13 13l6 6M8 5v6M5 8h6" stroke={blue} strokeWidth="1.300" />
        </Svg>
      </Tool5>
      <Tool5 label="Zoom Out">
        <Svg>
          <circle cx="8" cy="8" r="6.500" fill="#d6edfc" stroke={blue} strokeWidth="1.300" />
          <path d="M13 13l6 6M5 8h6" stroke={blue} strokeWidth="1.300" />
        </Svg>
      </Tool5>
      <Tool5 label="Tile Windows">
        <Svg>
          <rect x="2" y="2" width="16" height="16" rx="1" fill="#cfe9fb" stroke={blue} strokeWidth="1.400" />
          <path d="M10 2v16M2 10h16" stroke={blue} strokeWidth="1.400" />
        </Svg>
      </Tool5>
      <Sep className="mr-1 ml-px h-6" />
      <Tool5 label="Auto Scroll" on>
        <Svg>
          <path d="M2.500 3v2M2.500 12v2M6.500 3v2M6.500 12v2M1.500 5h2v7h-2zM5.500 5h2v7h-2zM10 8.500h6M13.500 5.500l3 3-3 3" stroke={green} strokeWidth="1.200" />
          <path d="M19 2v13" stroke={blue} strokeWidth="1.400" />
          <path d="M1 18.500h18" stroke="#8aa" />
        </Svg>
      </Tool5>
      <Tool5 label="Chart Shift" on>
        <Svg>
          <path d="M2.500 3v2M2.500 12v2M6.500 3v2M6.500 12v2M1.500 5h2v7h-2zM5.500 5h2v7h-2z" stroke={green} strokeWidth="1.200" />
          <path d="M10.500 2v13M19 8.500h-6M15.500 5.500l-3 3 3 3" stroke={blue} strokeWidth="1.400" />
          <path d="M1 18.500h18" stroke="#8aa" />
        </Svg>
      </Tool5>
      <Sep className="mr-[5px] ml-px h-6" />
      <Tool5 label="Screenshot">
        <Svg>
          <path d="M1 15V1h18v6" stroke={blue} strokeWidth="1.300" strokeDasharray="3 2" />
          <path d="M6 10h3l1.500-2h4L16 10h3v9H6z" fill="#cfe9fb" stroke={blue} strokeWidth="1.200" />
          <circle cx="12.500" cy="14" r="2.300" stroke={blue} strokeWidth="1.200" />
        </Svg>
      </Tool5>
      <span className="mr-1 ml-auto h-full w-px shrink-0 bg-[#aaa]" />
      <Grip className="h-6" />
      <div className="flex shrink-0 items-center gap-3.5 pr-[3px] pl-1.5">
        <Svg>
          <circle cx="9" cy="9" r="5.500" stroke="#222" strokeWidth="1.400" />
          <path d="M13 13l4 4" stroke="#222" strokeWidth="1.400" />
        </Svg>
        <Svg>
          <circle cx="10" cy="10" r="6.500" stroke="#222" strokeWidth="1.300" />
          <circle cx="10" cy="8" r="2.300" stroke="#222" strokeWidth="1.300" />
          <path d="M6 14.500q4-5 8 0" stroke="#222" strokeWidth="1.300" />
        </Svg>
        <span className="flex flex-col items-center">
          <Svg box="0 0 12 10" className="h-2.5 w-3">
            <path d="M6 1l4 4H7.500v4h-3V5H2z" fill="#e3fbe3" stroke={green} />
          </Svg>
          <span className="text-[8px] leading-2 font-bold text-[#21a038]">LVL</span>
        </span>
        <span className="h-[13px] w-[42px] border border-[#8c8c8c] bg-white">
          <span className="block h-full w-2 bg-[#30d030]" />
        </span>
      </div>
    </div>
  )
}

function DirIcon({ dir }: { dir: string }) {
  return (
    <Svg box="0 0 10 10" className="size-2.5">
      {dir === "down" && <path d="M2 2l6 6M8 3v5H3" stroke="#c83040" strokeWidth="1.100" />}
      {dir === "up" && <path d="M1.500 8.500l6.500-6.500M3 2h5v5" stroke="#21a038" strokeWidth="1.100" />}
      {dir === "none" && <circle cx="5" cy="5" r="2" fill="#a0a0a0" />}
    </Svg>
  )
}

const tone = (up: boolean) => (up ? "text-[#2222d8]" : "text-[#d82028]")

function Mt5MarketWatch() {
  return (
    <section className="flex h-[290px] flex-col border-b border-[#a0a0a0] px-[3px] pb-[5px]">
      <PanelHeader title="Market Watch: 07:26:46" />
      <div className="flex min-h-0 flex-1 overflow-hidden border-t-2 border-l border-[#8c8c8c] bg-white">
        <div className="min-w-0 flex-1 overflow-hidden bg-[#ebebeb]">
          <table className="w-full table-fixed border-separate border-spacing-0 bg-white text-[11px] leading-4">
            <colgroup>
              <col />
              <col className="w-[75px]" />
              <col className="w-[75px]" />
              <col className="w-[77px]" />
            </colgroup>
            <thead>
              <tr className="h-6 text-right">
                <th className="border-r border-[#e0e0e0] pl-1.5 text-left font-normal">Symbol</th>
                <th className="border-r border-[#e0e0e0] pr-1.5 font-normal">Bid</th>
                <th className="border-r border-[#e0e0e0] pr-1.5 font-normal">Ask</th>
                <th className="pr-1.5 font-normal">Daily Cha...</th>
              </tr>
            </thead>
            <tbody>
              {mt5Quotes.map((q, i) => (
                <tr key={q.symbol} className={clsx("h-5 text-right", q.symbol === "USDCHF" ? "bg-[#e1f0fd]" : i % 2 ? "bg-[#ebebeb]" : "bg-white")}>
                  <td className="border-r border-b border-[#c4c4c4] pl-[5px] text-left text-black">
                    <span className="flex items-center gap-1.5">
                      <DirIcon dir={q.dir} />
                      {q.symbol}
                    </span>
                  </td>
                  <td className={clsx("border-r border-b border-[#c4c4c4] pr-[3px]", tone(q.bidUp))}>{q.bid}</td>
                  <td className={clsx("border-r border-b border-[#c4c4c4] pr-[3px]", tone(q.askUp))}>{q.ask}</td>
                  <td className={clsx("border-b border-[#c4c4c4] pr-1", tone(!q.change.startsWith("-")))}>{q.change}</td>
                </tr>
              ))}
            </tbody>
          </table>
        </div>
        <ScrollBar thumb="top-0 h-[30px]" />
      </div>
      <div className="flex">
        <Tabs closed={false} items={[{ label: "Symbols" }, { label: "Details" }, { label: "Trading" }, { label: "Ticks" }]} />
      </div>
    </section>
  )
}

type Branch = { label: string; depth: number; toggle?: "plus" | "minus"; icon: ReactNode; last?: boolean }

const tree: Branch[] = [
  {
    label: "Accounts", depth: 0, toggle: "plus",
    icon: (
      <Svg box="0 0 16 16" className="size-4">
        <path d="M.7 14q0-5 4-5h2v5z" fill="#cfe9fb" stroke={blue} />
        <circle cx="5" cy="5" r="2.300" fill="#cfe9fb" stroke={blue} />
        <path d="M5.500 15q0-6 5-6t5 6z" fill="#cfe9fb" stroke={blue} />
        <circle cx="10.500" cy="4.500" r="3.200" fill="#cfe9fb" stroke={blue} />
      </Svg>
    ),
  },
  {
    label: "Subscriptions", depth: 0, toggle: "plus",
    icon: (
      <Svg box="0 0 16 16" className="size-4">
        <path d="M5.500 2a6.300 6.300 0 107 1.500M9 2.500h4V6" stroke={green} strokeWidth="1.300" />
      </Svg>
    ),
  },
  {
    label: "Indicators", depth: 0, toggle: "plus",
    icon: (
      <Svg box="0 0 16 16" className="size-4">
        <path d="M1 12q2-9 4-6t3 5 3-5 4-3" stroke={blue} />
        <path d="M1 9l4 3 3-4 2 4 2-8 3 2" stroke={green} />
      </Svg>
    ),
  },
  { label: "Expert Advisors", depth: 0, toggle: "minus", icon: <CapIcon /> },
  { label: "Market", depth: 1, toggle: "minus", icon: <CapIcon /> },
  { label: "Trade Copier for MT5", depth: 2, icon: <CapIcon />, last: true },
  { label: "Advisors", depth: 1, toggle: "plus", icon: <FolderIcon /> },
  { label: "Examples", depth: 1, toggle: "plus", icon: <FolderIcon />, last: true },
  {
    label: "Scripts", depth: 0, toggle: "plus",
    icon: (
      <Svg box="0 0 16 16" className="size-4">
        <path d="M4 2h9v9H4zM1.500 10.500H10q0 4 2.500 3H3q-1.500-.5-1.500-3z" fill="#ffc800" stroke="#c08c00" />
      </Svg>
    ),
  },
  {
    label: "Services", depth: 0,
    icon: (
      <Svg box="0 0 16 16" className="size-4">
        <path d="M8 .8l2 2.700 4.500-.5-.5 3.500L15.200 8 14 10l.5 3-4.500-.5-2 2.700-2-2.700-4.500.5.5-3L.8 8 2 6.500 1.500 3l4.500.5z" fill="#cfe9fb" stroke={blue} />
        <path d="M6.500 5.500v5l4-2.500z" fill="#fff" stroke={blue} />
      </Svg>
    ),
  },
  { label: "Market", depth: 0, toggle: "plus", icon: <BagIcon className="size-4" /> },
]

function Mt5Navigator() {
  return (
    <section className="flex min-h-0 flex-1 flex-col px-[3px] pt-0.5 pb-[7px]">
      <PanelHeader title="Navigator" />
      <div className="mt-px flex min-h-0 flex-1 overflow-hidden border-t border-l border-[#8c8c8c] bg-white">
        <ul className="h-0 min-w-0 flex-1 text-[11px] leading-4 text-black">
          <li className="flex h-5 items-center pl-1">
            <Svg box="0 0 16 16" className="mr-1.5 size-4">
              <path d="M1 2l4-1v4l4 2-1 4-6-4z" fill="#2a8ad8" />
              <path d="M6 3l6-2 3 4-5 3-2-2 3-2z" fill="#f4c51c" />
              <path d="M14 6v5l-6 4-2-3 5-2V8z" fill="#30a840" />
            </Svg>
            MetaTrader 5
          </li>
          {tree.map((b, i) => (
            <li key={i} className="flex h-5 items-center whitespace-nowrap">
              {Array.from({ length: b.depth }, (_, d) => (
                <span key={d} className="flex h-full w-[21px]">
                  <span className="w-[13px] border-r border-dotted border-[#808080]" />
                </span>
              ))}
              <span className="relative flex h-full w-[26px] items-center">
                <span className={clsx("absolute top-0 left-0 w-[13px] border-r border-dotted border-[#808080]", b.last ? "h-1/2" : "h-full")} />
                <span className="ml-[13px] w-2.5 border-t border-dotted border-[#808080]" />
                {b.toggle && (
                  <Svg box="0 0 9 9" className="absolute left-2 size-[9px]">
                    <path d="M.5.500h8v8h-8z" fill="#fff" stroke="#808080" />
                    <path d={b.toggle === "plus" ? "M2 4.500h5M4.500 2v5" : "M2 4.500h5"} stroke="#2a3a70" />
                  </Svg>
                )}
              </span>
              {b.icon}
              <span className="ml-[5px]">{b.label}</span>
            </li>
          ))}
        </ul>
        <ScrollBar thumb="top-0 h-[160px]" />
      </div>
      <div className="flex">
        <Tabs closed={false} items={[{ label: "Common" }, { label: "Favorites" }]} />
      </div>
    </section>
  )
}

const mt5Axis: [string, number][] = [
  ["1.00710", 95], ["1.00625", 128], ["1.00540", 160], ["1.00455", 193], ["1.00370", 226], ["1.00285", 258],
  ["1.00200", 291], ["1.00115", 324], ["1.00030", 356], ["0.99945", 389], ["0.99860", 422], ["0.99775", 455],
  ["0.99690", 487], ["0.99605", 520], ["0.99520", 553], ["0.99435", 585],
]
const mt5Dates = ["19 Oct 2022", "19 Oct 13:00", "19 Oct 21:00", "20 Oct 05:00", "20 Oct 13:00", "20 Oct 21:00", "21 Oct 05:00"]

function Mt5Chart() {
  return (
    <svg viewBox="1363 89 554 550" className="block size-full bg-black font-['DejaVu_Sans_Condensed','DejaVu_Sans',sans-serif] text-[9px]" fill="white">
      <path d="M1365.500 618V91.500H1864.500V618.500H1365" stroke="white" fill="none" shapeRendering="crispEdges" />
      <path d="M1366 139.500H1864" stroke="#3f8f4f" shapeRendering="crispEdges" />
      <path d="M1366 138.500H1864" stroke="#7fc88f" strokeDasharray="4 3" shapeRendering="crispEdges" />
      <path d={barPath(usdchfBars, 1365.5)} stroke="white" fill="none" shapeRendering="crispEdges" />
      <rect x="1758" y="126" width="15" height="24" rx="7.500" fill="#8b8b86" />
      <path d="M1765.500 137l-4-4h2v-3h4v3h2z" fill="#c83020" stroke="white" />
      <path d="M1765.500 139l4 4h-2v3h-4v-3h-2z" fill="#1a66c8" stroke="white" />
      <path d="M1760 92h11l-5.500 5z" fill="#708090" />
      <path d="M1370 97h7v11h-7z" fill="#e06a5a" />
      <path d="M1377 97h8v11h-8z" fill="#5aa8e0" />
      <path d="M1371 100h12M1371 103h12M1371 106h12" stroke="white" />
      <path d="M1391 97h5v5h3v6h-8z" fill="#e06a5a" stroke="white" strokeWidth=".6" />
      <path d="M1405 97h-4v5h-2v6h6z" fill="#5aa8e0" stroke="white" strokeWidth=".6" />
      <text x="1411" y="106" className="text-[10px]" xmlSpace="preserve">USDCHF, H1:  US Dollar vs Swiss Franc</text>
      <text x="1370" y="137" className="font-bold">BUY 0.01 at 1.00596</text>
      {mt5Axis.map(([label, y]) => (
        <g key={label}>
          <path d={`M1864 ${y + 0.5}h5`} stroke="white" shapeRendering="crispEdges" />
          <text x="1870" y={y + 4}>{label}</text>
        </g>
      ))}
      <rect x="1867" y="134" width="39" height="11" fill="#708090" />
      <text x="1870" y="143" fill="black">1.00595</text>
      {mt5Dates.map((d, i) => (
        <g key={d}>
          <path d={`M${1365.5 + i * 64} 618v4`} stroke="white" shapeRendering="crispEdges" />
          <text x={1365 + i * 64} y="631">{d}</text>
        </g>
      ))}
    </svg>
  )
}

function Mt5Toolbox() {
  const heads = ["Time", "Type", "Volume", "Price", "S / L", "T / P", "Price"]
  return (
    <section className="flex min-h-0 flex-1 border-t border-[#a0a0a0] pt-0.5">
      <div className="flex w-4 shrink-0 flex-col items-center">
        <SideCaption title="Toolbox" />
      </div>
      <div className="flex min-w-0 flex-1 flex-col pr-[3px]">
        <div className="flex-1 border-t border-l border-[#8c8c8c] bg-white">
          <table className="w-full table-fixed border-separate border-spacing-0 text-right text-[11px] leading-4 text-black">
            <colgroup>
              <col className="w-[113px]" />
              <col className="w-[78px]" />
              <col className="w-[130px]" />
              <col className="w-[86px]" />
              <col className="w-[86px]" />
              <col className="w-[86px]" />
              <col className="w-[86px]" />
              <col className="w-[86px]" />
              <col className="w-[86px]" />
              <col />
            </colgroup>
            <thead>
              <tr className="h-6">
                <th className="border-r border-[#e0e0e0] pl-1.5 text-left font-normal">
                  <span className="flex items-center gap-5">
                    Symbol
                    <Svg box="0 0 8 6" className="h-1.5 w-2"><path d="M1 5h6L4 1z" fill="#000" /></Svg>
                  </span>
                </th>
                <th className="border-r border-[#e0e0e0] pl-1.5 text-left font-normal">Ticket</th>
                {heads.map((h, i) => (
                  <th key={i} className="border-r border-[#e0e0e0] pr-[5px] font-normal">{h}</th>
                ))}
                <th className="pr-1.5 font-normal">Profit</th>
              </tr>
            </thead>
            <tbody>
              {mt5Orders.map((row, r) => (
                <tr key={row[1]} className={clsx("h-5", r % 2 ? "bg-[#ebebeb]" : "bg-white")}>
                  <td className="border-r border-b border-[#c4c4c4] pl-[3px] text-left">
                    <span className="flex items-center gap-1.5">
                      <Svg box="0 0 12 16" className="h-4 w-3">
                        <rect x=".7" y="1.200" width="10" height="13.500" rx="1.500" fill="#fff" stroke={row[3] === "buy" ? blue : "#c84848"} strokeWidth="1.300" />
                        <path d="M4 5.500h4M4 8.500h4" stroke={row[3] === "buy" ? blue : "#c84848"} />
                      </Svg>
                      {row[0]}
                    </span>
                  </td>
                  <td className="border-r border-b border-[#c4c4c4] pl-[3px] text-left">{row[1]}</td>
                  {row.slice(2, 9).map((cell, i) => (
                    <td key={i} className="border-r border-b border-[#c4c4c4] pr-[3px]">{cell}</td>
                  ))}
                  <td className={clsx("border-b border-[#c4c4c4] pr-1.5", tone(!row[9].startsWith("-")))}>
                    <span className="flex items-center justify-end gap-2.5">
                      {row[9]}
                      <CloseX className="text-[#8a8a8a]" />
                    </span>
                  </td>
                </tr>
              ))}
              <tr className="h-5 bg-[#c6c6c6] text-[12px] font-bold">
                <td colSpan={9} className="pl-[3px] text-left">
                  <span className="flex items-center gap-1.5 whitespace-pre">
                    <Svg box="0 0 12 12" className="size-3">
                      <circle cx="6" cy="6" r="5" stroke="#333" />
                      <path d="M3.500 6h5" stroke="#333" />
                    </Svg>
                    {"Balance: 88 906.96 USD  Equity: 88 906.88  Margin: 21.20  Free Margin: 88 885.68  Margin Level: 419 372.08 %"}
                  </span>
                </td>
                <td className="pr-6">-0.08</td>
              </tr>
            </tbody>
          </table>
        </div>
        <div className="flex">
          <Tabs
            closed={false}
            first="px-2"
            items={[
              { label: "Trade" }, { label: "Exposure" }, { label: "History" }, { label: "News" }, { label: "Mailbox", count: "8" },
              { label: "Calendar" }, { label: "Company" }, { label: "Alerts" }, { label: "Articles", count: "972" },
              { label: "Code Base" }, { label: "Experts" }, { label: "Journal" },
            ]}
          />
          <div className="flex items-center gap-1 border-t-2 border-black pt-1 pr-1 text-[11px] leading-4 text-black">
            <BagIcon className="size-[14px]" />
            <a href="#market" className="mr-2">Market</a>
            <SignalIcon className="size-4" />
            <a href="#signals" className="mr-2.5">Signals</a>
            <CloudIcon className="size-4" />
            <a href="#vps">VPS</a>
          </div>
        </div>
        <div className="h-1" />
      </div>
    </section>
  )
}

function Mt5Logo({ className = "size-4" }: { className?: string }) {
  return (
    <Svg className={className}>
      <circle cx="10" cy="6" r="5" fill="#4f9e35" />
      <circle cx="5" cy="14" r="5" fill="#3a78c0" />
      <circle cx="15" cy="14" r="5" fill="#e2b021" />
      <circle cx="10" cy="11" r="5" fill="#fbf6e6" stroke="#b48a30" />
      <path d="M12 8.500H8.500v2q4-.5 3.500 2t-4 1" stroke="#e07020" strokeWidth="1.300" />
    </Svg>
  )
}

function Mt5Window() {
  return (
    <main className="flex min-h-0 min-w-0 flex-col overflow-hidden bg-[#f0f0f0]">
      <header className="flex h-[30px] shrink-0 items-center bg-white pl-2 text-black">
        <Mt5Logo />
        <h1 className="ml-1.5 flex-1 text-[12px] whitespace-nowrap">5007319987 - MetaQuotes-Demo: Demo Account - Hedge - MetaQuotes Software Corp. - [USDCHF,H1]</h1>
        <WindowButtons />
      </header>
      <nav className="flex h-5 shrink-0 items-center pl-1.5 text-[12px] leading-4 text-[#111]">
        <Svg box="0 0 16 16" className="mr-[11px] size-4">
          <path d="M4 2v2M4 11v3M12 1v2M12 12v3M2 4h4v7H2zM10 3h4v9h-4z" stroke={green} strokeWidth="1.200" />
        </Svg>
        {["File", "View", "Insert", "Charts", "Tools", "Window", "Help"].map((m) => (
          <button key={m} className="pr-5">{m}</button>
        ))}
        <div className="ml-auto flex gap-[3px] pr-0.5 text-[#b0b0b0]">
          {[
            <path key="a" d="M4 12h8" stroke="currentColor" strokeWidth="2" />,
            <path key="b" d="M4 7h6v5H4zM7 5h5v6" stroke="currentColor" strokeWidth="1.500" />,
            <path key="c" d="M5 6l6 6M11 6l-6 6" stroke="currentColor" strokeWidth="2" />,
          ].map((p, i) => (
            <Svg key={i} box="0 0 16 16" className="size-4">{p}</Svg>
          ))}
        </div>
      </nav>
      <Mt5Tools />
      <div className="flex h-[573px] shrink-0">
        <aside className="flex w-[403px] shrink-0 flex-col border-r border-[#a0a0a0] px-px">
          <Mt5MarketWatch />
          <Mt5Navigator />
        </aside>
        <div className="flex min-w-0 flex-1 flex-col px-px">
          <div className="min-h-0 flex-1">
            <Mt5Chart />
          </div>
          <div className="mt-0.5 flex h-[21px] shrink-0 items-start border-t border-black text-[11px] leading-4 text-[#6d6d6d]">
            <button className="px-[13px] py-px">GBPUSD,H1</button>
            <button className="border-x border-b-2 border-black bg-white px-2.5 py-px text-black">USDCHF,H1</button>
            <Svg className="mr-1 ml-auto h-5 w-10" box="0 0 40 20">
              <path d="M14 7v6l-4-3zM32 7v6l4-3z" fill="#aaa" />
            </Svg>
          </div>
        </div>
      </div>
      <Mt5Toolbox />
      <footer className="flex h-6 shrink-0 items-stretch border-t-2 border-[#a0a0a0] py-1 text-[11px] leading-4 text-black">
        <span className="flex-1" />
        <span className="w-[128px] border-l border-[#999] pl-[5px]">Default</span>
        <span className="w-[98px] border-l border-[#999]" />
        <span className="w-[71px] border-l border-[#999]" />
        <span className="w-[71px] border-l border-[#999]" />
        <span className="w-[68px] border-l border-[#999]" />
        <span className="w-[70px] border-l border-[#999]" />
        <span className="w-[66px] border-l border-[#999]" />
        <span className="flex w-[120px] border-l border-[#999] pl-[5px]">
          <Svg box="0 0 12 12" className="mt-0.5 mr-2 size-3">
            <path d="M1 12V9M3.500 12V7M6 12V5M8.500 12V3M11 12V0" stroke={green} strokeWidth="1.600" />
          </Svg>
          260.61 ms
        </span>
      </footer>
    </main>
  )
}

/* ---------- taskbar ---------- */

const CopierIcon = () => (
  <Svg box="0 0 24 24" className="size-6">
    <path d="M13 1l11 11-11 11-3-3 8-8-8-8z" fill="#2a4fa0" />
    <path d="M11 6v5L7 15l-3-3zM13 9v7l-4 4-3-3zM1 12l2-2 3 3-2 2z" fill="#2a4fa0" />
  </Svg>
)

const apps: { name: string; running?: boolean; active?: boolean; icon: ReactNode }[] = [
  {
    name: "Task View",
    icon: (
      <Svg>
        <path d="M3 6h9v8H3zM3 1v3h9V1M3 19v-3h9v3M16 1v4M16 10v9" stroke="#111" strokeWidth="1.400" />
        <path d="M15 6h3v3h-3z" fill="#111" />
      </Svg>
    ),
  },
  {
    name: "Mail",
    icon: (
      <Svg box="0 0 24 24" className="size-6">
        <path d="M0 9l12-8 12 8v14H0z" fill="#0d5cb8" />
        <path d="M2 9h20v6l-10 6-10-6z" fill="#f4fbff" />
        <path d="M0 9l12 8L0 23z" fill="#1484e0" />
        <path d="M24 9L12 17l-12 6h24z" fill="#2ba4f0" />
      </Svg>
    ),
  },
  {
    name: "Control Panel",
    icon: (
      <Svg box="0 0 24 24" className="size-6">
        <rect x="1" y="4" width="22" height="16" rx="1" fill="#69bdf0" stroke="#2f8ac8" />
        <circle cx="8" cy="11" r="4" fill="#fff" />
        <path d="M8 11V7a4 4 0 014 4z" fill="#2060b8" />
        <path d="M14 8h6M14 11h6M5 17h12" stroke="#fff" strokeWidth="1.500" />
        <path d="M14 14h6" stroke="#e0a030" strokeWidth="1.500" />
      </Svg>
    ),
  },
  {
    name: "File Explorer",
    icon: (
      <Svg box="0 0 24 24" className="size-6">
        <path d="M1 3h8l2 3h11v4H1z" fill="#e8a820" />
        <path d="M1 7h22v13H1z" fill="#ffd75e" />
        <path d="M5 13h14v8h-4v-4H9v4H5z" fill="#3f8fd8" />
      </Svg>
    ),
  },
  {
    name: "Notes",
    icon: (
      <Svg box="0 0 24 24" className="size-6">
        <path d="M20 3l3 15-6 3z" fill="#7a7468" />
        <path d="M7 2h13l-5 19L1 18z" fill="#7cc3cf" />
        <path d="M8 3h10l-3 9L4 14z" fill="#b9e4ea" />
      </Svg>
    ),
  },
  {
    name: "Remote Desktop",
    running: true,
    icon: (
      <Svg box="0 0 24 24" className="size-6">
        <path d="M2 2l15-1 2 13-14 2z" fill="#1a3fd0" stroke="#9aa8c8" />
        <path d="M3 3l8-1-2 12-4 1z" fill="#4a78f0" />
        <path d="M8 18l9-1 1 4-9 1z" fill="#a8b0b8" />
        <circle cx="18" cy="18" r="5" fill="#dfe8df" stroke="#7a8a7a" />
        <path d="M15.500 16.500l2.500 2-2 2M20.500 15.500l-2 2 2.500 2" stroke="#2a7a3a" />
      </Svg>
    ),
  },
  {
    name: "Chrome",
    running: true,
    icon: (
      <Svg box="0 0 24 24" className="size-6">
        <circle cx="12" cy="12" r="12" fill="#fbc116" />
        <path d="M12 12L1.600 6A12 12 0 0122.400 6z" fill="#e33b2e" />
        <path d="M1.600 6A12 12 0 0012 24l5-9-5 2.500-5-3z" fill="#229c4b" />
        <circle cx="12" cy="12" r="5.500" fill="#fff" />
        <circle cx="12" cy="12" r="4.300" fill="#1a73e8" />
      </Svg>
    ),
  },
  {
    name: "Recorder",
    icon: (
      <Svg box="0 0 24 24" className="size-6">
        <circle cx="12" cy="12" r="11.500" fill="#e0806a" />
        <path d="M12 .5a11.500 11.500 0 010 23z" fill="#b868b0" />
        <circle cx="12" cy="12" r="10" fill="#333038" />
        <circle cx="12" cy="12" r="4" fill="#fff" />
        <circle cx="12" cy="12" r="1.500" fill="#333" />
      </Svg>
    ),
  },
  {
    name: "Bluebeam",
    running: true,
    icon: (
      <Svg box="0 0 24 24" className="size-6">
        <path d="M0 0h24v24H0z" fill="#0a84d8" />
        <path d="M4 8q2 0 2 5t4 3l5-11q7-1 3 5l-6 2q8-1 6 4-2 5-9 3" stroke="#0c1420" strokeWidth="2.400" />
      </Svg>
    ),
  },
  { name: "Copier 1", running: true, icon: <CopierIcon /> },
  { name: "Copier 2", running: true, icon: <CopierIcon /> },
  { name: "MetaTrader 5", running: true, active: true, icon: <Mt5Logo className="size-6" /> },
  {
    name: "GlobalPrime",
    running: true,
    icon: (
      <Svg box="0 0 24 24" className="size-6">
        <circle cx="12" cy="12" r="12" fill="#fff" />
        <circle cx="12" cy="12" r="8" stroke="#201c4c" strokeWidth="2.600" />
      </Svg>
    ),
  },
]

function Taskbar() {
  return (
    <footer className="flex h-10 shrink-0 items-stretch bg-linear-to-r from-[#cfdfea] via-[#d2e7f1] to-[#d6e4ec] text-black">
      <button aria-label="Start" className="flex w-[49px] items-center justify-center pr-0.5">
        <Svg box="0 0 16 16" className="size-4">
          <path d="M0 2.300l6.500-.9v6.200H0zM7.300 1.300L16 0v7.600H7.300zM0 8.400h6.500v6.200L0 13.700zM7.300 8.400H16V16l-8.700-1.300z" fill="#000" />
        </Svg>
      </button>
      <div className="mr-px flex w-[343px] items-center border border-[#c0ccd4] bg-white pl-2.5">
        <Svg className="size-[18px]">
          <circle cx="12" cy="7" r="5.500" stroke="#222" strokeWidth="1.400" />
          <path d="M8 11L2 18" stroke="#222" strokeWidth="1.400" />
        </Svg>
        <input aria-label="Search" placeholder="Type here to search" className="ml-2.5 min-w-0 flex-1 bg-transparent text-[14px] outline-none placeholder:text-[#444]" />
        <Svg box="0 0 80 38" className="h-[38px] w-20">
          <path d="M0 38Q4 26 24 28T60 26Q74 26 80 32V38z" fill="#4fb0cc" />
          <path d="M33 37V14M49 31V12M64 36V16" stroke="#7a3a1c" strokeWidth="2.500" />
          <path d="M28 4q2-5 4 0 4-5 7 0-3 8-6 10-4-4-5-10zM44 2q5-5 10 0-1 8-5 11-4-5-5-11zM60 7q4-5 9 0-1 8-5 10-4-4-4-10z" fill="#d19a2c" />
          <path d="M26 19q4-5 7 3 3-7 7-1-2 8-7 9-6-2-7-11zM43 15q4-4 6 2 4-6 6 0-1 6-6 8-5-2-6-10zM58 21q4-4 6 2 4-6 6 0-1 6-6 9-5-3-6-11z" fill="#d8761e" />
          <path d="M15 16v8M11 20h8" stroke="#e070e8" strokeWidth="3" />
          <circle cx="20" cy="6" r="1.700" fill="#48c8d0" />
          <circle cx="74" cy="17" r="1.700" fill="#48c870" />
        </Svg>
      </div>
      <nav className="flex">
        {apps.map((a) => (
          <button
            key={a.name}
            aria-label={a.name}
            className={clsx("flex w-[49px] flex-col items-center justify-end", a.active && "bg-[#e9f3f8]")}
          >
            <span className="flex flex-1 items-center">{a.icon}</span>
            <span className={clsx("h-0.5", a.active ? "w-full" : "w-10", a.running && "bg-[#0a78d0]")} />
          </button>
        ))}
      </nav>
      <div className="ml-auto flex items-center text-[14px]">
        <Svg box="0 0 24 18" className="h-[18px] w-6">
          <path d="M5 17a5 5 0 010-9 7 7 0 0113-1 5 5 0 011 10z" fill="#a9c2f0" stroke="#7f9fe0" />
          <path d="M5 17a4 4 0 010-7q5-2 6 3 6-3 8 4z" fill="#c9d8f7" />
        </Svg>
        <span className="ml-1.5">29°C</span>
        <span className="ml-2">Cloudy</span>
        <Svg className="ml-5 size-5"><path d="M4 13l6-6 6 6" stroke="#111" strokeWidth="1.400" /></Svg>
        <Svg className="ml-1 size-5">
          <rect x="5" y="6" width="7" height="9" rx="2" stroke="#111" strokeWidth="1.300" />
          <path d="M12 9l3-2v7l-3-2M5 3q4-3 8 0M5 18q4 2 8 0" stroke="#111" strokeWidth="1.200" />
        </Svg>
        <Svg className="ml-1 size-5">
          <path d="M5 5h13v9H5zM9 17h7M12 14v3M1 3h6v5H1zM4 8v9" stroke="#111" strokeWidth="1.200" />
        </Svg>
        <Svg className="ml-1 size-5">
          <path d="M2 8h3l4-4v12l-4-4H2zM11.500 8q1.500 2 0 4M14 6q3 4 0 8" stroke="#111" strokeWidth="1.200" />
          <path d="M16.500 4q4 6 0 12" stroke="#999" strokeWidth="1.200" />
        </Svg>
        <span className="ml-1.5 text-[12px]">ENG</span>
        <time className="ml-1 text-center text-[12px] leading-[18px]">
          12:26 PM
          <br />
          21/10/2022
        </time>
        <span className="relative mr-[21px] ml-4 flex">
          <Svg>
            <path d="M2 2h16v12h-4v3l-4-3H2z" fill="#111" />
            <path d="M5 5.500h10M5 8h10M5 10.500h6" stroke="#fff" />
          </Svg>
          <span className="absolute -right-1.5 -bottom-1.5 flex size-4 items-center justify-center rounded-full border border-[#888] bg-[#dcdcdc] text-[11px] leading-none">4</span>
        </span>
      </div>
    </footer>
  )
}

export default function App() {
  return (
    <div className="flex h-screen w-full flex-col overflow-hidden bg-[#1477e2] font-['Open_Sans',sans-serif]">
      <div className="flex min-h-0 flex-1 pt-1.5">
        <div className="w-[5px] shrink-0 bg-linear-to-b from-[#1477e2] from-0% via-[#20283a] via-20% to-[#0a5a9c]" />
        <div className="grid min-w-0 flex-1 grid-cols-[952fr_959fr] gap-0.5 bg-[#24405f] pr-0.5">
          <Mt4Window />
          <Mt5Window />
        </div>
      </div>
      <Taskbar />
    </div>
  )
}
